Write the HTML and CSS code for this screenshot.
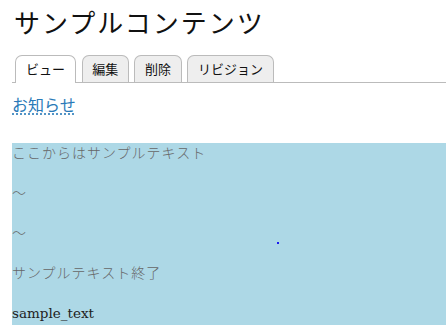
FILE: index.html
```html
<!DOCTYPE html>
<html lang="ja">
<head>
<meta charset="utf-8">
<link rel="stylesheet" href="styles.css">
</head>
<body>
<h1 class="title">サンプルコンテンツ</h1>
<ul class="tabs">
  <li class="tab active">ビュー</li>
  <li class="tab">編集</li>
  <li class="tab">削除</li>
  <li class="tab">リビジョン</li>
</ul>
<p class="news"><a href="#" class="news-link">お知らせ</a></p>
<div class="box">
  <p class="line">ここからはサンプルテキスト</p>
  <p class="line">～</p>
  <p class="line">～</p>
  <p class="line">サンプルテキスト終了</p>
  <p class="line latin">sample_text</p>
  <span class="dot"></span>
</div>
</body>
</html>
```
FILE: styles.css
```css
html, body {
  margin: 0;
  padding: 0;
  background: #fff;
}
body {
  padding: 0 0 0 12px;
  overflow: hidden;
  font-family: "Liberation Serif", "Noto Sans CJK JP", serif;
}
.title {
  margin: 0;
  padding-top: 8px;
  height: 42px;
  font-size: 26px;
  line-height: 34px;
  font-weight: normal;
  color: #111;
  letter-spacing: 2px;
  padding-left: 2px;
}
.tabs {
  list-style: none;
  margin: 5px 0 0 0;
  padding: 0 0 0 3px;
  display: flex;
  gap: 5.5px;
  border-bottom: 1px solid #bbb;
}
.tab {
  height: 26px;
  padding: 0 9.7px;
  border: 1px solid #bbb;
  border-bottom: none;
  border-radius: 7px 7px 0 0;
  background: #eee;
  font-family: "Noto Sans CJK JP", sans-serif;
  font-size: 13px;
  line-height: 25px;
  color: #111;
}
.tab.active {
  background: #fff;
  margin-bottom: -1px;
  height: 27px;
  padding: 0 10px;
}
.news {
  margin: 10px 0 0 0;
  font-family: "Noto Sans CJK JP", sans-serif;
  font-size: 16px;
  line-height: 22px;
}
.news-link {
  color: #2a7ab8;
  text-decoration: underline dotted #2a7ab8;
  text-underline-offset: 3px;
}
.box {
  position: relative;
  margin-top: 28px;
  background: #add8e6;
  padding-bottom: 2px;
}
.line {
  margin: 0 0 20px 0;
  font-size: 14px;
  line-height: 18px;
  padding-bottom: 2px;
  color: #666;
  letter-spacing: 1px;
  font-family: "Noto Sans CJK JP", serif;
  font-weight: 300;
}
.line.latin {
  margin-bottom: 0;
  font-family: "DejaVu Serif", serif;
  font-size: 13.5px;
  line-height: 20px;
  padding-bottom: 0;
  letter-spacing: 0;
  color: #222;
  font-weight: normal;
}
.dot {
  position: absolute;
  left: 265px;
  top: 99px;
  width: 2px;
  height: 2px;
  background: #1a1af0;
}
```
